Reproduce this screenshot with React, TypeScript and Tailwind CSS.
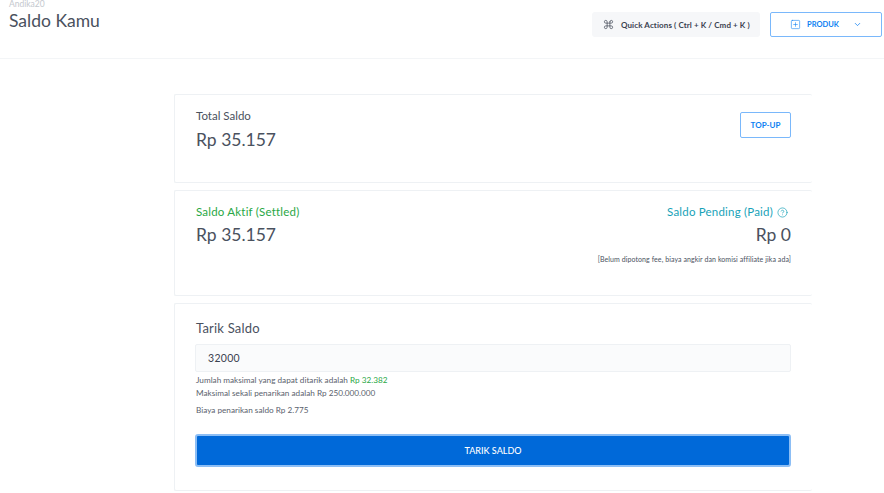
import { Command, CircleHelp, SquarePlus, ChevronDown } from "lucide-react"

const font = { fontFamily: "Lato, 'Noto Sans', sans-serif" }

function Header() {
  return (
    <header className="h-[59px] border-b border-[#f3f5f7] flex justify-between pl-[9px] pr-[2px]">
      <div>
        <div className="text-[8.5px] leading-[9px] text-[#c4c8ce]">Andika20</div>
        <h1 className="text-[17.5px] leading-[24px] text-[#4a515e]">Saldo Kamu</h1>
      </div>
      <div className="flex gap-[10px] pt-[12px] h-[50px]">
        <button className="w-[168px] h-[25px] bg-[#f6f7f9] rounded-[3px] flex items-center pl-[11px] gap-[7px] text-[8px] font-bold tracking-[0.1px] text-[#3b4250]">
          <Command size={11} strokeWidth={1.5} />
          <span>Quick Actions ( Ctrl + K / Cmd + K )</span>
        </button>
        <button className="w-[112px] h-[25px] border border-[#7ab8fb] rounded-[2px] flex items-center justify-center gap-[6px] text-[7.5px] font-bold text-[#0d7ff2]">
          <SquarePlus size={11} strokeWidth={1.25} />
          <span>PRODUK</span>
          <ChevronDown size={9} className="ml-[8px]" />
        </button>
      </div>
    </header>
  )
}

function Card({ className, children }: { className: string; children: React.ReactNode }) {
  return (
    <section className={"border border-[#eef1f4] rounded-[2px] border-r-0 pl-[20px] pr-[21px] " + className}>{children}</section>
  )
}

export default function App() {
  return (
    <div className="w-[884px] h-[493px] overflow-hidden bg-white" style={font}>
      <Header />
      <main className="ml-[174px] w-[638px] pt-[35px] flex flex-col gap-[7px]">
        <Card className="h-[89px] pt-[13px] flex justify-between">
          <div className="ml-px">
            <div className="text-[11.5px] leading-[16px] text-[#4a515e]">Total Saldo</div>
            <div className="text-[17.5px] leading-[24px] mt-[4px] text-[#4a515e]">Rp 35.157</div>
          </div>
          <button className="w-[51px] h-[26px] mt-[4px] border border-[#7ab8fb] rounded-[2px] text-[8px] font-bold text-[#0d7ff2]">
            TOP-UP
          </button>
        </Card>
        <Card className="h-[106px] pt-[13px] flex justify-between">
          <div className="ml-px">
            <div className="text-[11.5px] leading-[16px] tracking-[0.2px] text-[#28a745]">Saldo Aktif (Settled)</div>
            <div className="text-[17.5px] leading-[24px] mt-[3px] text-[#4a515e]">Rp 35.157</div>
          </div>
          <div className="flex flex-col items-end">
            <div className="text-[11.5px] leading-[16px] tracking-[0.2px] text-[#17a2b8] flex items-center gap-[4px] pr-[3px]">
              Saldo Pending (Paid)
              <CircleHelp size={11} strokeWidth={1.5} />
            </div>
            <div className="text-[17.5px] leading-[24px] mt-[3px] text-[#4a515e]">Rp 0</div>
            <div className="text-[7px] leading-[10px] mt-[7px] tracking-[0.08px] text-[#4a515e]">
              [Belum dipotong fee, biaya angkir dan komisi affiliate jika ada]
            </div>
          </div>
        </Card>
        <Card className="h-[188px] pt-[15px]">
          <div className="ml-px text-[13px] leading-[18px] tracking-[0.2px] text-[#4a515e]">Tarik Saldo</div>
          <input
            readOnly
            value="32000"
            className="block w-[596px] h-[28px] mt-[7px] px-[12px] bg-[#fafbfc] border border-[#eef1f4] rounded-[2px] text-[10.5px] tracking-[0.3px] text-[#3b4250]"
          />
          <div className="ml-px text-[8.2px] leading-[10px] mt-[3px] text-[#5a616d]">
            Jumlah maksimal yang dapat ditarik adalah <span className="text-[#28a745]">Rp 32.382</span>
          </div>
          <div className="ml-px text-[8.2px] leading-[10px] mt-[3px] text-[#5a616d]">Maksimal sekali penarikan adalah Rp 250.000.000</div>
          <div className="ml-px text-[8.2px] leading-[10px] mt-[7px] text-[#5a616d]">Biaya penarikan saldo Rp 2.775</div>
          <button className="block w-[596px] h-[33px] mt-[19px] bg-[#0069d9] border-[2px] border-[#8cbef5] rounded-[3px] text-[9px] font-medium text-white">
            TARIK SALDO
          </button>
        </Card>
      </main>
    </div>
  )
}
